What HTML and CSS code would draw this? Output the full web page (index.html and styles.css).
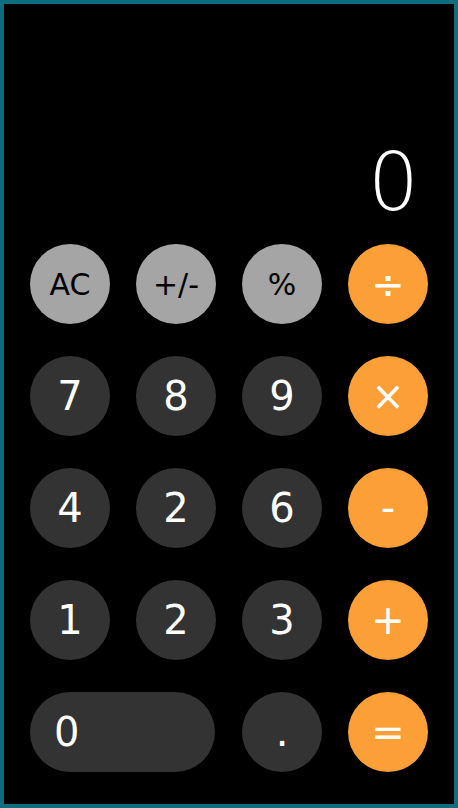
FILE: index.html
```html
<!DOCTYPE html>
<html>
<head>
<meta charset="UTF-8">
<title>Calculator</title>
<link rel="stylesheet" href="styles.css">
</head>
<body>

<div class="calc">
	<div class="display">0</div>

	<div class="keys">
		<button type="button" class="key fn">AC</button>
		<button type="button" class="key fn">+/-</button>
		<button type="button" class="key fn">%</button>
		<button type="button" class="key op">÷</button>

		<button type="button" class="key num">7</button>
		<button type="button" class="key num">8</button>
		<button type="button" class="key num">9</button>
		<button type="button" class="key op">×</button>

		<button type="button" class="key num">4</button>
		<button type="button" class="key num">2</button>
		<button type="button" class="key num">6</button>
		<button type="button" class="key op">-</button>

		<button type="button" class="key num">1</button>
		<button type="button" class="key num">2</button>
		<button type="button" class="key num">3</button>
		<button type="button" class="key op">+</button>

		<button type="button" class="key num zero">0</button>
		<button type="button" class="key num">.</button>
		<button type="button" class="key op">=</button>
	</div>
</div>

</body>
</html>
```

FILE: styles.css
```css
body { margin: 0; }

.calc
{
	box-sizing: border-box;
	width: 458px;
	height: 808px;
	border: 4px solid #0f6e7e;
	background-color: #000;
	padding: 0 26px 32px 26px;
	display: flex;
	flex-direction: column;
	justify-content: flex-end;
	font-family: "DejaVu Sans", sans-serif;
}

.display
{
	color: #fff;
	font-size: 80px;
	font-weight: 200;
	line-height: 80px;
	text-align: right;
	padding-right: 9px;
	margin-bottom: 21px;
}

.keys
{
	display: grid;
	grid-template-columns: repeat(4, 80px);
	grid-auto-rows: 80px;
	column-gap: 26px;
	row-gap: 32px;
}

.key
{
	border: 0;
	padding: 0;
	margin: 0;
	border-radius: 40px;
	font-family: "DejaVu Sans", sans-serif;
	font-size: 40px;
	color: #fff;
	display: flex;
	align-items: center;
	justify-content: center;
}

.fn
{
	background-color: #a5a5a5;
	color: #000;
	font-size: 30px;
}

.num { background-color: #333333; }

.op { background-color: #fd9f37; }

.zero
{
	grid-column: span 2;
	width: 185px;
	justify-content: flex-start;
	padding-left: 24px;
}
```
